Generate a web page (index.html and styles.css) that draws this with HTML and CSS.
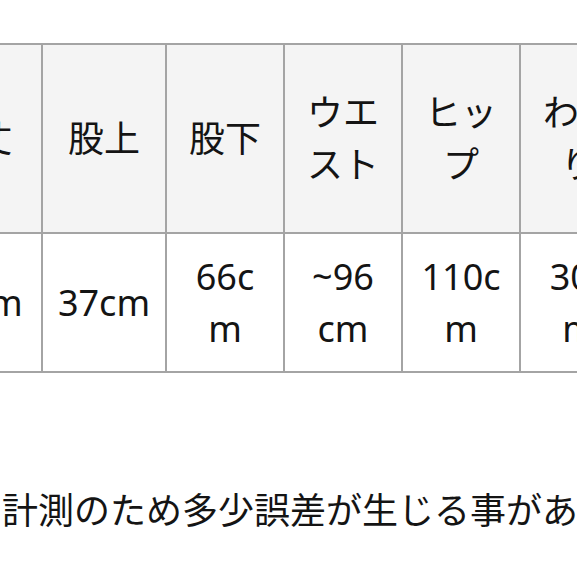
FILE: index.html
```html
<!DOCTYPE html>
<html lang="ja">
<head>
<meta charset="utf-8">
<title>サイズ表</title>
<link rel="stylesheet" href="styles.css">
</head>
<body>
<main class="page">
  <div class="table-wrap">
    <table class="size-table">
      <colgroup>
        <col class="c-first">
        <col class="c-second">
        <col class="c-std">
        <col class="c-std">
        <col class="c-std">
        <col class="c-std">
      </colgroup>
      <thead>
        <tr class="head-row">
          <th>総丈</th>
          <th>股上</th>
          <th>股下</th>
          <th>ウエスト</th>
          <th>ヒップ</th>
          <th>わたり</th>
        </tr>
      </thead>
      <tbody>
        <tr class="data-row">
          <td>97cm</td>
          <td>37cm</td>
          <td>66c<br>m</td>
          <td>~96<br>cm</td>
          <td>110c<br>m</td>
          <td>30c<br>m</td>
        </tr>
      </tbody>
    </table>
  </div>
  <p class="note">計測のため多少誤差が生じる事があります。</p>
</main>
</body>
</html>
```

FILE: styles.css
```css
html, body {
  margin: 0;
  padding: 0;
  background: #ffffff;
  overflow: hidden;
}

body {
  width: 577px;
  height: 577px;
  font-family: "Noto Sans", "Noto Sans CJK JP", sans-serif;
  color: #141414;
}

.page {
  padding-top: 43px;
}

.table-wrap {
  margin-left: -88px;
  width: 727px;
}

.size-table {
  table-layout: fixed;
  width: 727px;
  border-collapse: separate;
  border-spacing: 0;
  border-top: 2px solid #a4a4a4;
  font-size: 36px;
  line-height: 52px;
}

.c-first { width: 131px; }
.c-second { width: 124px; }
.c-std { width: 118px; }

.size-table th,
.size-table td {
  box-sizing: border-box;
  padding: 0 8px;
  text-align: center;
  vertical-align: middle;
  border-right: 2px solid #a4a4a4;
  border-bottom: 2px solid #a4a4a4;
  font-weight: 400;
}

.head-row th {
  height: 189px;
  background: #f4f4f4;
}

.data-row td {
  height: 139px;
  background: #ffffff;
}

.note {
  margin: 109px 0 0 2px;
  font-size: 36px;
  line-height: 52px;
  white-space: nowrap;
  font-family: "Noto Sans CJK JP", sans-serif;
}
```
